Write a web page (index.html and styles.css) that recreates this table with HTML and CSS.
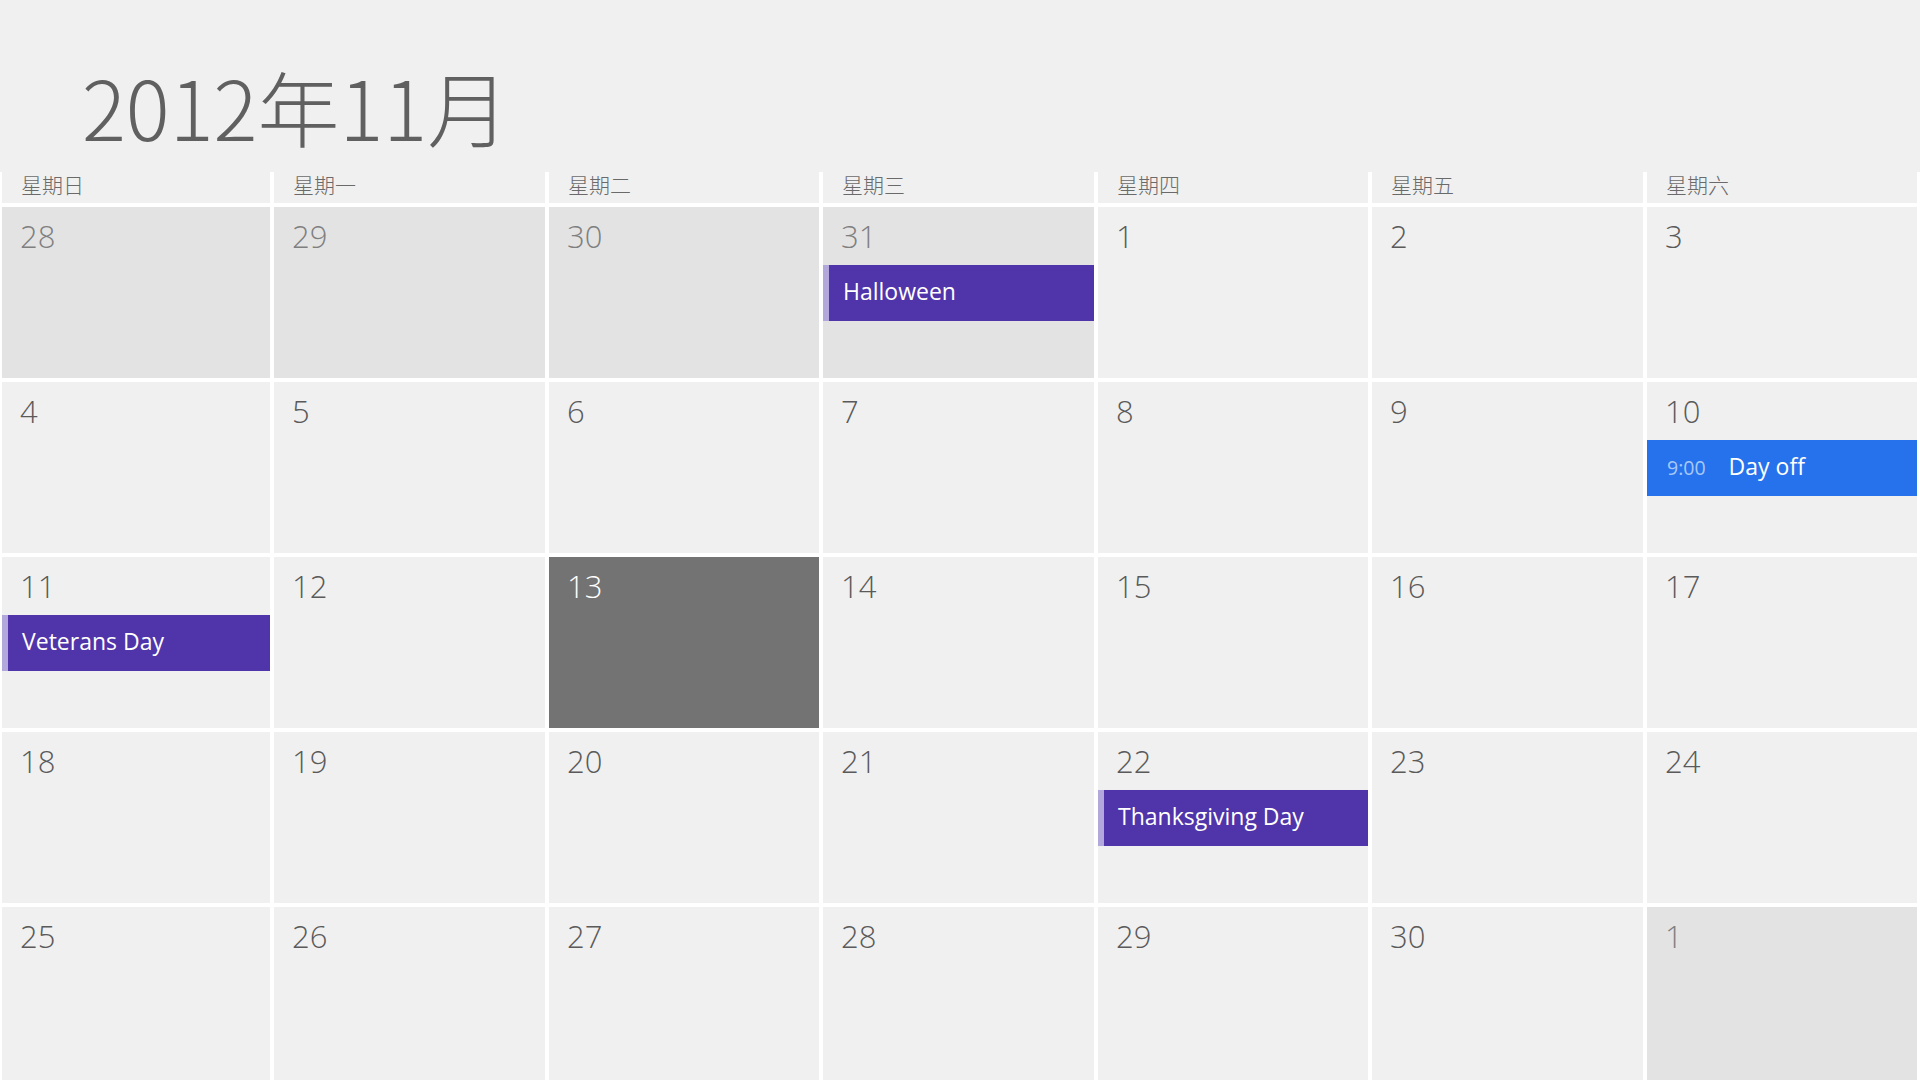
FILE: index.html
```html
<!DOCTYPE html>
<html lang="zh-CN">
<head>
<meta charset="utf-8">
<title>2012年11月</title>
<link rel="stylesheet" href="styles.css">
</head>
<body>
<div class="page">
  <h1 class="title">2012年11月</h1>
  <div class="calendar">
    <div class="dow">星期日</div>
    <div class="dow">星期一</div>
    <div class="dow">星期二</div>
    <div class="dow">星期三</div>
    <div class="dow">星期四</div>
    <div class="dow">星期五</div>
    <div class="dow">星期六</div>

    <div class="day other"><span class="num">28</span></div>
    <div class="day other"><span class="num">29</span></div>
    <div class="day other"><span class="num">30</span></div>
    <div class="day other"><span class="num">31</span><div class="event holiday">Halloween</div></div>
    <div class="day"><span class="num">1</span></div>
    <div class="day"><span class="num">2</span></div>
    <div class="day"><span class="num">3</span></div>

    <div class="day"><span class="num">4</span></div>
    <div class="day"><span class="num">5</span></div>
    <div class="day"><span class="num">6</span></div>
    <div class="day"><span class="num">7</span></div>
    <div class="day"><span class="num">8</span></div>
    <div class="day"><span class="num">9</span></div>
    <div class="day"><span class="num">10</span><div class="event appointment"><span class="label"><span class="time">9:00</span>Day off</span></div></div>

    <div class="day"><span class="num">11</span><div class="event holiday">Veterans Day</div></div>
    <div class="day"><span class="num">12</span></div>
    <div class="day today"><span class="num">13</span></div>
    <div class="day"><span class="num">14</span></div>
    <div class="day"><span class="num">15</span></div>
    <div class="day"><span class="num">16</span></div>
    <div class="day"><span class="num">17</span></div>

    <div class="day"><span class="num">18</span></div>
    <div class="day"><span class="num">19</span></div>
    <div class="day"><span class="num">20</span></div>
    <div class="day"><span class="num">21</span></div>
    <div class="day"><span class="num">22</span><div class="event holiday">Thanksgiving Day</div></div>
    <div class="day"><span class="num">23</span></div>
    <div class="day"><span class="num">24</span></div>

    <div class="day"><span class="num">25</span></div>
    <div class="day"><span class="num">26</span></div>
    <div class="day"><span class="num">27</span></div>
    <div class="day"><span class="num">28</span></div>
    <div class="day"><span class="num">29</span></div>
    <div class="day"><span class="num">30</span></div>
    <div class="day other"><span class="num">1</span></div>
  </div>
</div>
</body>
</html>
```
FILE: styles.css
```css
html, body {
  margin: 0;
  padding: 0;
}

body {
  background: #f0f0f0;
  width: 1920px;
  height: 1080px;
  overflow: hidden;
  font-family: "Open Sans", "Noto Sans CJK SC", sans-serif;
}

.page {
  display: flex;
  flex-direction: column;
  height: 1080px;
}

.title {
  margin: 0;
  padding: 65px 0 0 82px;
  height: 82px;
  font-family: "Noto Sans CJK SC", sans-serif;
  font-size: 82px;
  line-height: 82px;
  font-weight: 300;
  color: #606060;
}

.calendar {
  margin-top: 25px;
  flex: 1;
  background: #ffffff;
  display: grid;
  grid-template-columns: 268px 271px 270px 271px 270px 271px 270px;
  grid-template-rows: 31px repeat(4, 171px) 1fr;
  column-gap: 4px;
  row-gap: 4px;
  padding-left: 2px;
}

.dow {
  background: #f0f0f0;
  font-family: "Noto Sans CJK SC", sans-serif;
  font-size: 21px;
  line-height: 25px;
  font-weight: 300;
  color: #6a6a6a;
  padding-left: 19px;
}

.day {
  background: #f0f0f0;
  display: flex;
  flex-direction: column;
  min-width: 0;
}

.day.other {
  background: #e3e3e3;
}

.day.today {
  background: #737373;
}

.num {
  display: block;
  padding: 11px 0 0 18px;
  font-size: 31px;
  line-height: 36px;
  font-weight: 350;
  color: #5a5a5a;
}

.other .num {
  color: #7f7f7f;
}

.today .num {
  color: #ffffff;
}

.event {
  margin-top: 11px;
  height: 56px;
  display: flex;
  align-items: center;
  box-sizing: border-box;
  padding-bottom: 4px;
  font-size: 23px;
  color: #ffffff;
  white-space: nowrap;
  overflow: hidden;
}

.event.holiday {
  background: #5034aa;
  border-left: 6px solid #b3a8dc;
  padding-left: 14px;
}

.event.appointment {
  background: #2672ec;
  padding-left: 20px;
}

.time {
  font-size: 19.5px;
  color: #a9c8f7;
  margin-right: 23px;
}
```
